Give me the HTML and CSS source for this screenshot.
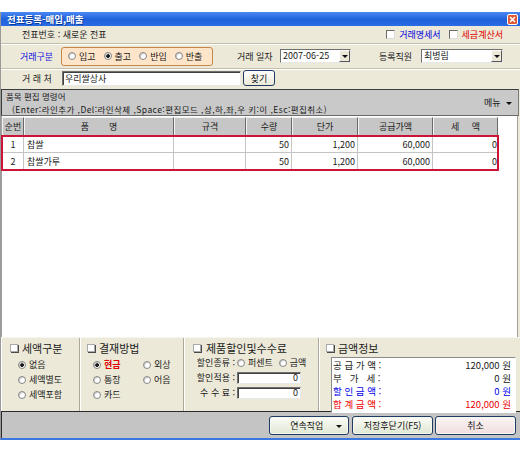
FILE: index.html
```html
<!DOCTYPE html>
<html lang="ko">
<head>
    <meta charset="UTF-8">
    <title>전표등록-매입,매출</title>
    <link rel="stylesheet" href="styles.css">
</head>
<body>
    <div class="window">
        <div class="titlebar">
            <span class="title">전표등록-매입,매출</span>
            <span class="close">
                <svg width="9" height="9" viewBox="0 0 9 9"><path d="M2 2 L7 7 M7 2 L2 7" stroke="#fff" stroke-width="1.6"/></svg>
            </span>
        </div>

        <div class="row row-no">
            <span class="label">전표번호 : 새로운 전표</span>
            <div class="checks">
                <label class="check blue"><span class="box"></span>거래명세서</label>
                <label class="check red"><span class="box"></span>세금계산서</label>
            </div>
        </div>

        <div class="row row-type">
            <span class="label type-label">거래구분</span>
            <div class="radio-group">
                <span class="radio"><i></i>입고</span>
                <span class="radio"><i class="on"></i>출고</span>
                <span class="radio"><i></i>반입</span>
                <span class="radio"><i></i>반출</span>
            </div>
            <span class="label date-label">거래 일자</span>
            <div class="combo date">
                <span class="combo-text">2007-06-25</span>
                <span class="combo-btn"><span class="tri"></span></span>
            </div>
            <span class="label staff-label">등록직원</span>
            <div class="combo staff">
                <span class="combo-text">최병림</span>
                <span class="combo-btn"><span class="tri"></span></span>
            </div>
        </div>

        <div class="row row-client">
            <span class="label client-label">거 래 처</span>
            <div class="textbox client">우리쌀상사</div>
            <button class="btn-find">찾기</button>
        </div>

        <div class="commands">
            <div class="commands-text">
                <div>품목 편집 명령어</div>
                <div class="commands-keys">(Enter:라인추가 ,Del:라인삭제 ,Space:편집모드 ,상,하,좌,우 키:이 ,Esc:편집취소)</div>
            </div>
            <span class="menu">메뉴 <span class="tri"></span></span>
        </div>

        <div class="grid">
            <table class="grid-head">
                <colgroup>
                    <col style="width:22px"><col style="width:150px"><col style="width:72px"><col style="width:46px">
                    <col style="width:66px"><col style="width:75px"><col style="width:65px">
                </colgroup>
                <tr>
                    <th>순번</th><th>품&nbsp;&nbsp;&nbsp;&nbsp;&nbsp;&nbsp;&nbsp;&nbsp;명</th><th>규격</th><th>수량</th>
                    <th>단가</th><th>공급가액</th><th>세&nbsp;&nbsp;&nbsp;&nbsp;&nbsp;액</th>
                </tr>
            </table>
            <div class="selected-rows">
                <table class="grid-body">
                    <colgroup>
                        <col style="width:21px"><col style="width:150px"><col style="width:72px"><col style="width:46px">
                        <col style="width:66px"><col style="width:75px"><col style="width:64px">
                    </colgroup>
                    <tr>
                        <td class="c">1</td><td>찹쌀</td><td></td><td class="n">50</td>
                        <td class="n">1,200</td><td class="n">60,000</td><td class="n last">0</td>
                    </tr>
                    <tr>
                        <td class="c">2</td><td>찹쌀가루</td><td></td><td class="n">50</td>
                        <td class="n">1,200</td><td class="n">60,000</td><td class="n last">0</td>
                    </tr>
                </table>
            </div>
        </div>

        <div class="panels">
            <div class="group g-tax">
                <div class="group-title"><span class="mark"></span>세액구분</div>
                <div class="radio-list">
                    <span class="radio"><i class="on"></i>없음</span>
                    <span class="radio"><i></i>세액별도</span>
                    <span class="radio"><i></i>세액포함</span>
                </div>
            </div>
            <div class="group g-pay">
                <div class="group-title"><span class="mark"></span>결재방법</div>
                <div class="radio-cols">
                    <span class="radio"><i class="on"></i><b class="cash">현금</b></span>
                    <span class="radio"><i></i>외상</span>
                    <span class="radio"><i></i>통장</span>
                    <span class="radio"><i></i>어음</span>
                    <span class="radio"><i></i>카드</span>
                </div>
            </div>
            <div class="group g-discount">
                <div class="group-title"><span class="mark"></span>제품할인및수수료</div>
                <div class="form-line">
                    <span class="form-label">할인종류 :</span>
                    <span class="radio"><i></i>퍼센트</span>
                    <span class="radio"><i></i>금액</span>
                </div>
                <div class="form-line">
                    <span class="form-label">할인적용 :</span>
                    <div class="textbox amount">0</div>
                </div>
                <div class="form-line">
                    <span class="form-label">수 수 료 :</span>
                    <div class="textbox amount">0</div>
                </div>
            </div>
            <div class="group g-sum">
                <div class="group-title"><span class="mark"></span>금액정보</div>
                <div class="sum-box">
                    <div class="sum-line"><span>공 급 가 액 :</span><span>120,000 원</span></div>
                    <div class="sum-line"><span>부&nbsp;&nbsp;&nbsp;가&nbsp;&nbsp;&nbsp;세 :</span><span>0 원</span></div>
                    <div class="sum-line blue"><span>할 인 금 액 :</span><span>0 원</span></div>
                    <div class="sum-line red"><span>합 계 금 액 :</span><span>120,000 원</span></div>
                </div>
            </div>
        </div>

        <div class="actions">
            <button class="btn btn-more">연속작업 <span class="tri"></span></button>
            <button class="btn btn-save">저장후닫기(F5)</button>
            <button class="btn btn-cancel">취소</button>
        </div>
    </div>
</body>
</html>
```

FILE: styles.css
```css
* {
    box-sizing: border-box;
}

body {
    margin: 0;
    background: #fff;
    font-family: "Noto Sans CJK KR", "Noto Sans", sans-serif;
    font-size: 9px;
    color: #1a1a1a;
}

.window {
    margin-top: 12px;
    width: 520px;
    background: #ece9d8;
    border-left: 1px solid #9a9a9a;
    border-bottom: 2px solid #3a78e0;
}

.titlebar {
    height: 14px;
    background: linear-gradient(#4a88f2, #1f60dc 55%, #2b6ce4);
    display: flex;
    align-items: center;
    justify-content: space-between;
    padding: 0 2px 0 6px;
}

.title {
    color: #fff;
    font-weight: 700;
    font-size: 9.5px;
    line-height: 14px;
    text-shadow: 1px 1px 0 #0a3a9a;
}

.close {
    width: 11px;
    height: 11px;
    background: #df5733;
    border: 1px solid #fff;
    border-radius: 2px;
    display: flex;
    align-items: center;
    justify-content: center;
}

.row {
    display: flex;
    align-items: center;
    border-bottom: 1px solid #c3bfab;
    box-shadow: 0 1px 0 #fff;
}

.row-no {
    height: 18px;
    padding-left: 21px;
    padding-right: 17px;
}

.row-type {
    height: 25px;
    padding-left: 19px;
}

.row-client {
    height: 18px;
    padding-left: 21px;
    border-bottom: none;
    box-shadow: none;
}

.label {
    white-space: nowrap;
}

.checks {
    margin-left: auto;
    display: flex;
    gap: 8px;
}

.check {
    display: flex;
    align-items: center;
    gap: 4px;
}

.check .box {
    width: 9px;
    height: 9px;
    background: #fff;
    border: 1px solid;
    border-color: #6b6b6b #dcdcdc #dcdcdc #6b6b6b;
}

.blue {
    color: #0000e0;
}

.red {
    color: #e00000;
}

.type-label {
    width: 41px;
    color: #1010e0;
}

.radio-group {
    width: 152px;
    height: 19px;
    background: #fee5c9;
    border: 1px solid #c4874a;
    border-radius: 3px;
    display: flex;
    align-items: center;
    gap: 8px;
    padding-left: 6px;
}

.radio {
    display: flex;
    align-items: center;
    gap: 3px;
    white-space: nowrap;
}

.radio i {
    width: 8px;
    height: 8px;
    border-radius: 50%;
    border: 1px solid #858585;
    background: #fff;
    box-shadow: inset 1px 1px 0 #cfcfcf;
}

.radio i.on {
    background: radial-gradient(circle, #1e1e1e 0 1.6px, #fff 2.2px);
}

.date-label {
    width: 43px;
    margin-left: 24px;
}

.staff-label {
    width: 42px;
    margin-left: 28px;
}

.combo {
    height: 14px;
    background: #fff;
    border: 1px solid;
    border-color: #707070 #e8e8e8 #e8e8e8 #707070;
    display: flex;
    align-items: stretch;
}

.combo.date {
    width: 71px;
}

.combo.staff {
    width: 82px;
}

.combo-text {
    flex: 1;
    padding-left: 2px;
    line-height: 12px;
}

.combo-btn {
    width: 11px;
    background: #ece9d8;
    border: 1px solid;
    border-color: #fff #555 #555 #fff;
    display: flex;
    align-items: center;
    justify-content: center;
}

.tri {
    display: inline-block;
    width: 0;
    height: 0;
    border-left: 3px solid transparent;
    border-right: 3px solid transparent;
    border-top: 3px solid #111;
    vertical-align: middle;
}

.client-label {
    width: 40px;
}

.textbox {
    background: #fff;
    border: 1px solid;
    border-color: #707070 #e8e8e8 #e8e8e8 #707070;
    box-shadow: inset 1px 1px 0 #404040;
    padding: 0 2px;
    line-height: 13px;
}

.textbox.client {
    width: 179px;
    height: 15px;
}

.btn-find {
    margin-left: 2px;
    width: 32px;
    height: 16px;
    padding: 0;
    font: inherit;
    color: #111;
    background: linear-gradient(#ffffff, #ece9d8);
    border: 1px solid #1f3b63;
    border-radius: 3px;
}

.commands {
    margin: 2px 1px 0 0;
    height: 27px;
    background: #c9c9c9;
    border: 1px solid;
    border-color: #3c3c3c #7a7a7a #6a6a6a #3c3c3c;
    display: flex;
    align-items: center;
    padding: 0 6px 0 4px;
}

.commands-text {
    flex: 1;
    font-size: 8.5px;
    line-height: 12.4px;
}

.commands-keys {
    padding-left: 6px;
    letter-spacing: 0.45px;
}

.menu {
    white-space: nowrap;
}

.menu .tri {
    margin-left: 3px;
}

.grid {
    width: 517px;
    height: 221px;
    background: #fff;
    border-left: 1px solid #a0a0a0;
    border-right: 1px solid #a0a0a0;
    padding-top: 1px;
}

.grid table {
    border-collapse: separate;
    border-spacing: 0;
    table-layout: fixed;
}

.grid-head {
    width: 496px;
}

.grid-head th {
    height: 19px;
    padding: 0;
    font-weight: normal;
    background: #c6c6c6;
    border-top: 1px solid #f2f2f2;
    border-left: 1px solid #f2f2f2;
    border-right: 1px solid #6a6a6a;
    border-bottom: 1px solid #6a6a6a;
    text-align: center;
    white-space: nowrap;
}

.selected-rows {
    width: 498px;
    margin: -1px 0 0 -1px;
    border: 2px solid #cc1438;
}

.grid-body {
    width: 494px;
}

.grid-body td {
    height: 16px;
    padding: 0 2px 0 3px;
    border-right: 1px solid #c4c4c4;
    border-bottom: 1px solid #c4c4c4;
    white-space: nowrap;
    overflow: hidden;
}

.grid-body tr:last-child td {
    border-bottom: none;
}

.grid-body td.c {
    text-align: center;
    padding: 0;
}

.grid-body td.n {
    text-align: right;
}

.grid-body td.last {
    border-right: none;
    padding-right: 0;
}

.panels {
    height: 74px;
    display: flex;
    border-top: 1px solid #f6f5ee;
}

.group {
    border-right: 1px solid #aca899;
    box-shadow: inset 1px 0 0 #fff;
}

.g-tax {
    width: 79px;
    padding-left: 9px;
}

.g-pay {
    width: 104px;
    padding-left: 7px;
}

.g-discount {
    width: 135px;
    padding-left: 9px;
}

.g-sum {
    flex: 1;
    border-right: none;
    padding-left: 7px;
}

.group-title {
    height: 15px;
    margin-top: 2px;
    display: flex;
    align-items: center;
    gap: 4px;
    font-size: 11px;
    white-space: nowrap;
}

.mark {
    width: 8px;
    height: 8px;
    background: #fff;
    border: 1px solid #a9a9a9;
    box-shadow: 1px 1px 0 #4a4a4a;
}

.radio-list {
    margin-top: 2px;
    padding-left: 8px;
    display: flex;
    flex-direction: column;
}

.radio-list .radio,
.radio-cols .radio {
    height: 15px;
}

.radio-cols {
    margin-top: 2px;
    padding-left: 6px;
    display: grid;
    grid-template-columns: 50px 50px;
}

.cash {
    color: #e00000;
    font-weight: 700;
}

.g-discount .group-title {
    gap: 5px;
}

.form-line {
    height: 15px;
    display: flex;
    align-items: center;
    gap: 2px;
}

.form-line:first-of-type {
    margin-top: 2px;
}

.form-line .radio + .radio {
    margin-left: 4px;
}

.form-label {
    width: 41px;
    margin-left: 1px;
    text-align: right;
    white-space: nowrap;
}

.textbox.amount {
    width: 64px;
    height: 12px;
    line-height: 10px;
    text-align: right;
}

.sum-box {
    margin: 2px 4px 0 5px;
    height: 56px;
    background: #fff;
    border: 1px solid;
    border-color: #8a8a8a #fff #fff #8a8a8a;
    padding: 1px 4px 0 1px;
}

.sum-line {
    display: flex;
    justify-content: space-between;
    font-size: 9.5px;
    line-height: 13px;
    white-space: nowrap;
}

.sum-line.blue {
    color: #0000ee;
}

.sum-line.red {
    color: #ee0000;
}

.actions {
    height: 27px;
    background: #c4c4c4;
    border-top: 1px solid #2b2b2b;
    border-left: 1px solid #2b2b2b;
    display: flex;
    align-items: center;
    justify-content: flex-end;
    padding-right: 4px;
    gap: 2px;
}

.btn {
    height: 19px;
    width: 81px;
    padding: 0;
    font: inherit;
    color: #111;
    border: 1px solid #1f3b63;
    border-radius: 3px;
    background: linear-gradient(#fbfcf6, #dfe7d4);
    box-shadow: inset 0 0 0 1px #f6f8ef;
}

.btn-more {
    width: 80px;
    margin-right: 1px;
    padding-left: 14px;
}

.btn-more .tri {
    margin-left: 10px;
}

.btn-cancel {
    background: linear-gradient(#fbf4f4, #f0dede);
}
```
